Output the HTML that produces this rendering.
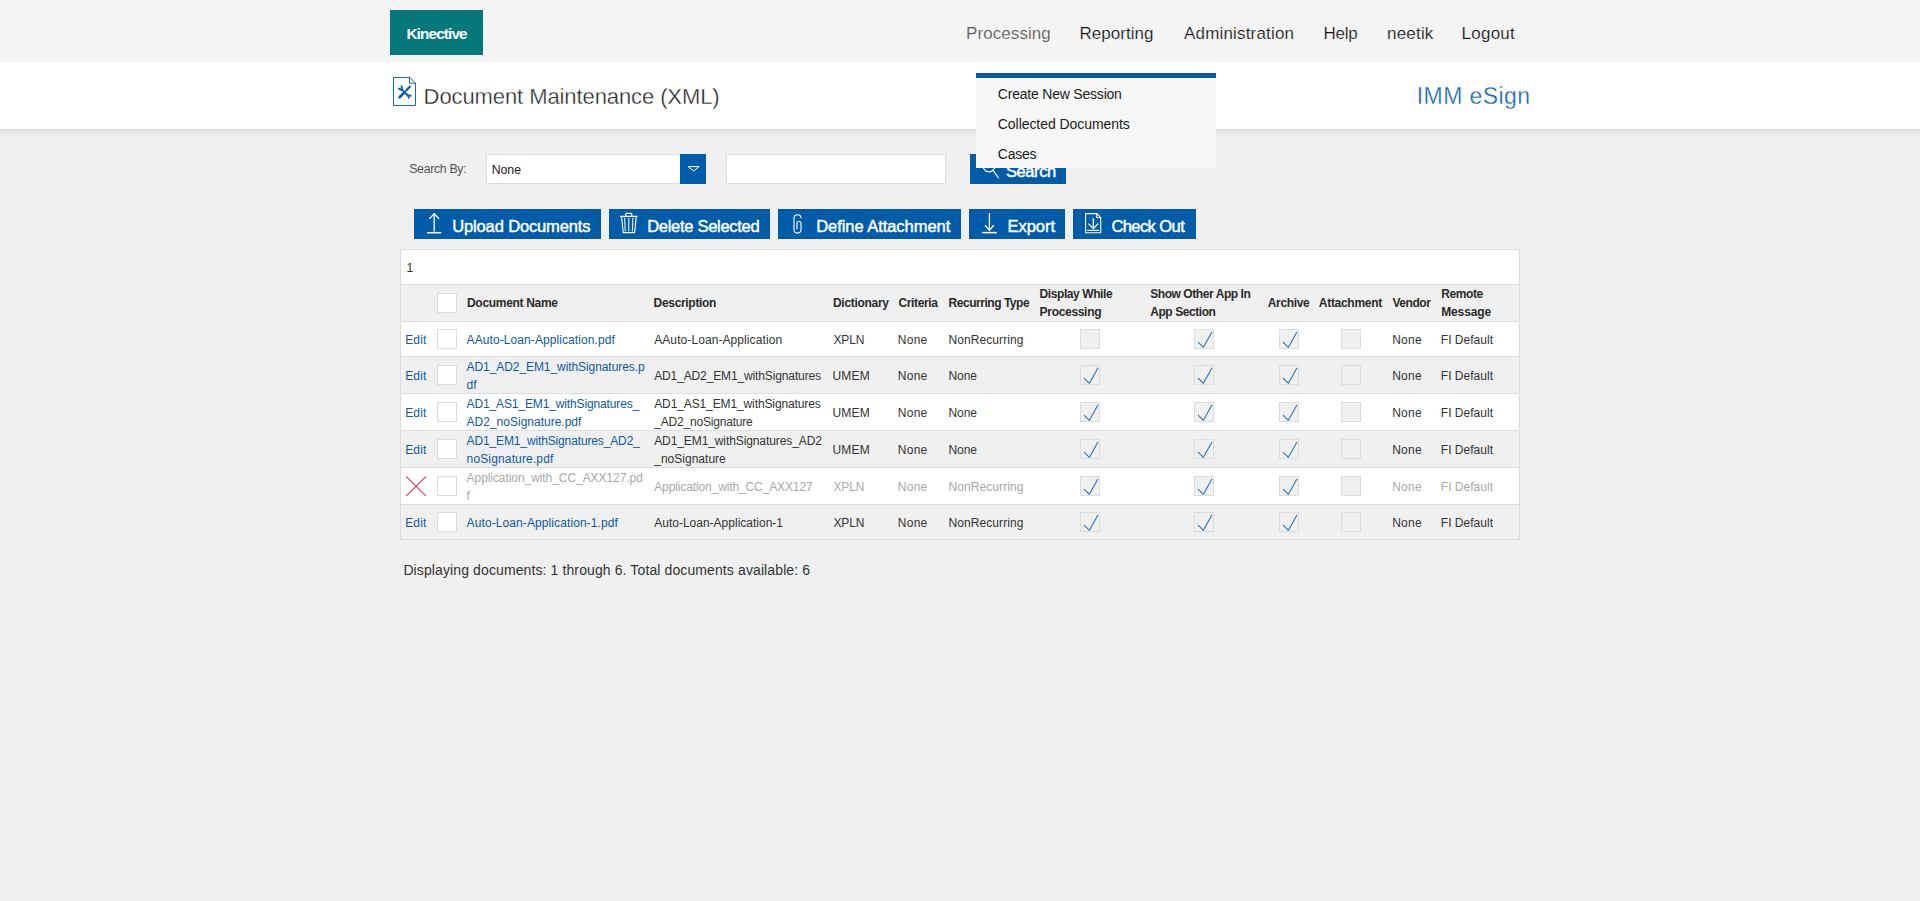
<!DOCTYPE html>
<html><head><meta charset="utf-8"><title>Document Maintenance (XML)</title>
<style>
html,body{margin:0;padding:0;}
body{width:1920px;height:901px;overflow:hidden;background:#f0f0f0;position:relative;font-family:"Liberation Sans",sans-serif;}
.b{position:absolute;}
.t{position:absolute;white-space:nowrap;}
</style></head><body>
<div class="b" style="left:0px;top:0px;width:1920px;height:62px;background:#f4f4f4"></div>
<div class="b" style="left:0px;top:62px;width:1920px;height:67px;background:#fff"></div>
<div class="b" style="left:0px;top:129px;width:1920px;height:8px;background:linear-gradient(rgba(0,0,0,0.09),rgba(0,0,0,0.035) 50%,rgba(0,0,0,0))"></div>
<div class="b" style="left:390px;top:10px;width:93px;height:45px;background:#05787b"></div>
<svg class="b" style="left:388px;top:72px" width="36" height="40" viewBox="388 72 36 40">
<path d="M393.5 77.5 H409.8 L415.5 83 V105.5 H393.5 Z" fill="none" stroke="#1a67b8" stroke-width="1"/>
<path d="M409.5 77.5 V83.2 H415.5" fill="none" stroke="#1a67b8" stroke-width="1"/>
<g stroke="#0a5fb0" fill="none" stroke-linecap="round">
<path d="M401.2 89 L408.4 96" stroke-width="1.9"/>
<path d="M400.6 89.8 L398.8 88.5" stroke-width="1.7"/>
<path d="M402.2 88.2 L401.3 86.2" stroke-width="1.7"/>
<path d="M409.2 95.2 L410.8 95.9" stroke-width="1.7"/>
<path d="M408.4 96.4 L408.9 98" stroke-width="1.7"/>
<path d="M399.6 97.2 L403.4 93.4" stroke-width="2.7"/>
<path d="M403.4 93.4 L407.2 89.4" stroke-width="1.5"/>
<path d="M407 89.6 L409.8 86.8" stroke-width="2.3"/>
</g>
</svg>
<div class="b" style="left:486px;top:154px;width:220px;height:30px;background:#fff;border:1px solid #dcdcdc;box-sizing:border-box"></div>
<div class="b" style="left:680px;top:154px;width:26px;height:30px;background:#005ca8"></div>
<svg class="b" style="left:680px;top:154px" width="26" height="30" viewBox="680 154 26 30">
<path d="M688.2 166.6 H699.2 L693.7 170.9 Z" fill="none" stroke="#fff" stroke-width="1" stroke-linejoin="miter"/>
</svg>
<div class="b" style="left:726px;top:154px;width:220px;height:30px;background:#fff;border:1px solid #dcdcdc;box-sizing:border-box"></div>
<div class="b" style="left:970px;top:154px;width:96px;height:30px;background:#005ca8"></div>
<svg class="b" style="left:970px;top:154px" width="40" height="30" viewBox="970 154 40 30">
<circle cx="989" cy="165.8" r="6" fill="none" stroke="#fff" stroke-width="1.2"/>
<path d="M993.2 170.4 L998.6 178.2" stroke="#fff" stroke-width="1.1"/>
</svg>
<div class="b" style="left:414px;top:209px;width:187px;height:30px;background:#005ca8"></div>
<div class="b" style="left:609px;top:209px;width:161px;height:30px;background:#005ca8"></div>
<div class="b" style="left:778px;top:209px;width:183px;height:30px;background:#005ca8"></div>
<div class="b" style="left:969px;top:209px;width:96px;height:30px;background:#005ca8"></div>
<div class="b" style="left:1073px;top:209px;width:123px;height:30px;background:#005ca8"></div>
<svg class="b" style="left:400px;top:205px" width="720" height="36" viewBox="400 205 720 36">
<g fill="none" stroke="#fff" stroke-width="1.3">
<path d="M434.2 213.8 V231.5"/><path d="M429.5 218.8 L434.2 213.6 L438.9 218.8"/><path d="M427 232.7 H441.3" stroke-width="1.5"/>
<path d="M620 216.4 H637.6" stroke-width="1.3"/><path d="M625.8 216.3 V214.2 Q625.8 213.4 626.6 213.4 H631 Q631.8 213.4 631.8 214.2 V216.3" stroke-width="1.1"/>
<path d="M621.5 216.5 L623.2 232.6 H634.6 L636.3 216.5" stroke-width="1.1"/>
<path d="M624.6 217.8 L625.3 231.5 M628.8 217.8 V231.5 M633 217.8 L632.3 231.5" stroke-width="1"/>
<path d="M801 218.2 A3.5 3.5 0 0 0 794 218.2 V229.6 A3.5 3.5 0 0 0 801 229.6 V223.5 A2 2 0 0 0 797 223.5 V229.2" stroke-width="1.1"/>
<path d="M989.4 213 V230.5"/><path d="M985 225.3 L989.4 230.3 L993.8 225.3"/><path d="M982.1 232.6 H996.9" stroke-width="1.5"/>
<path d="M1085.6 213.6 H1096.8 L1100.7 217.4 V232.8 H1085.6 Z" stroke-width="1.1"/>
<path d="M1096.6 213.6 V217.6 H1100.7" stroke-width="1"/>
<path d="M1093.3 218.3 V228.5"/><path d="M1088.4 223.6 L1093.3 228.6 L1098.2 223.6"/><path d="M1087.2 230.4 H1099" stroke-width="1.2"/>
</g></svg>
<div class="b" style="left:400px;top:249px;width:1120px;height:291px;background:#fff;border:1px solid #dcdcdc;box-sizing:border-box"></div>
<div class="b" style="left:401px;top:284px;width:1118px;height:1px;background:#dcdcdc"></div>
<div class="b" style="left:401px;top:321px;width:1118px;height:1px;background:#dcdcdc"></div>
<div class="b" style="left:401px;top:356px;width:1118px;height:1px;background:#dcdcdc"></div>
<div class="b" style="left:401px;top:393px;width:1118px;height:1px;background:#dcdcdc"></div>
<div class="b" style="left:401px;top:430px;width:1118px;height:1px;background:#dcdcdc"></div>
<div class="b" style="left:401px;top:467px;width:1118px;height:1px;background:#dcdcdc"></div>
<div class="b" style="left:401px;top:504px;width:1118px;height:1px;background:#dcdcdc"></div>
<div class="b" style="left:401px;top:285px;width:1118px;height:36px;background:#f0f0f0"></div>
<div class="b" style="left:401px;top:357px;width:1118px;height:36px;background:#f0f0f0"></div>
<div class="b" style="left:401px;top:431px;width:1118px;height:36px;background:#f0f0f0"></div>
<div class="b" style="left:401px;top:505px;width:1118px;height:34px;background:#f0f0f0"></div>
<div class="b" style="left:437px;top:293px;width:20px;height:20px;background:#fff;border:1px solid #dcdcdc;box-sizing:border-box"></div>
<div class="b" style="left:437px;top:329px;width:20px;height:20px;background:#fff;border:1px solid #dcdcdc;box-sizing:border-box"></div>
<div class="b" style="left:437px;top:365px;width:20px;height:20px;background:#fff;border:1px solid #dcdcdc;box-sizing:border-box"></div>
<div class="b" style="left:437px;top:402px;width:20px;height:20px;background:#fff;border:1px solid #dcdcdc;box-sizing:border-box"></div>
<div class="b" style="left:437px;top:439px;width:20px;height:20px;background:#fff;border:1px solid #dcdcdc;box-sizing:border-box"></div>
<div class="b" style="left:437px;top:476px;width:20px;height:20px;background:#fff;border:1px solid #dcdcdc;box-sizing:border-box"></div>
<div class="b" style="left:437px;top:512px;width:20px;height:20px;background:#fff;border:1px solid #dcdcdc;box-sizing:border-box"></div>
<div class="b" style="left:1080px;top:329px;width:20px;height:20px;background:#f0f0f0;border:1px solid #dcdcdc;box-sizing:border-box"></div>
<div class="b" style="left:1194px;top:329px;width:20px;height:20px;background:#f0f0f0;border:1px solid #dcdcdc;box-sizing:border-box"></div>
<div class="b" style="left:1279px;top:329px;width:20px;height:20px;background:#f0f0f0;border:1px solid #dcdcdc;box-sizing:border-box"></div>
<div class="b" style="left:1341px;top:329px;width:20px;height:20px;background:#f0f0f0;border:1px solid #dcdcdc;box-sizing:border-box"></div>
<div class="b" style="left:1080px;top:365px;width:20px;height:20px;background:#f0f0f0;border:1px solid #dcdcdc;box-sizing:border-box"></div>
<div class="b" style="left:1194px;top:365px;width:20px;height:20px;background:#f0f0f0;border:1px solid #dcdcdc;box-sizing:border-box"></div>
<div class="b" style="left:1279px;top:365px;width:20px;height:20px;background:#f0f0f0;border:1px solid #dcdcdc;box-sizing:border-box"></div>
<div class="b" style="left:1341px;top:365px;width:20px;height:20px;background:#f0f0f0;border:1px solid #dcdcdc;box-sizing:border-box"></div>
<div class="b" style="left:1080px;top:402px;width:20px;height:20px;background:#f0f0f0;border:1px solid #dcdcdc;box-sizing:border-box"></div>
<div class="b" style="left:1194px;top:402px;width:20px;height:20px;background:#f0f0f0;border:1px solid #dcdcdc;box-sizing:border-box"></div>
<div class="b" style="left:1279px;top:402px;width:20px;height:20px;background:#f0f0f0;border:1px solid #dcdcdc;box-sizing:border-box"></div>
<div class="b" style="left:1341px;top:402px;width:20px;height:20px;background:#f0f0f0;border:1px solid #dcdcdc;box-sizing:border-box"></div>
<div class="b" style="left:1080px;top:439px;width:20px;height:20px;background:#f0f0f0;border:1px solid #dcdcdc;box-sizing:border-box"></div>
<div class="b" style="left:1194px;top:439px;width:20px;height:20px;background:#f0f0f0;border:1px solid #dcdcdc;box-sizing:border-box"></div>
<div class="b" style="left:1279px;top:439px;width:20px;height:20px;background:#f0f0f0;border:1px solid #dcdcdc;box-sizing:border-box"></div>
<div class="b" style="left:1341px;top:439px;width:20px;height:20px;background:#f0f0f0;border:1px solid #dcdcdc;box-sizing:border-box"></div>
<div class="b" style="left:1080px;top:476px;width:20px;height:20px;background:#f0f0f0;border:1px solid #dcdcdc;box-sizing:border-box"></div>
<div class="b" style="left:1194px;top:476px;width:20px;height:20px;background:#f0f0f0;border:1px solid #dcdcdc;box-sizing:border-box"></div>
<div class="b" style="left:1279px;top:476px;width:20px;height:20px;background:#f0f0f0;border:1px solid #dcdcdc;box-sizing:border-box"></div>
<div class="b" style="left:1341px;top:476px;width:20px;height:20px;background:#f0f0f0;border:1px solid #dcdcdc;box-sizing:border-box"></div>
<div class="b" style="left:1080px;top:512px;width:20px;height:20px;background:#f0f0f0;border:1px solid #dcdcdc;box-sizing:border-box"></div>
<div class="b" style="left:1194px;top:512px;width:20px;height:20px;background:#f0f0f0;border:1px solid #dcdcdc;box-sizing:border-box"></div>
<div class="b" style="left:1279px;top:512px;width:20px;height:20px;background:#f0f0f0;border:1px solid #dcdcdc;box-sizing:border-box"></div>
<div class="b" style="left:1341px;top:512px;width:20px;height:20px;background:#f0f0f0;border:1px solid #dcdcdc;box-sizing:border-box"></div>
<svg class="b" style="left:1070px;top:320px" width="300" height="220" viewBox="1070 320 300 220"><g fill="none" stroke="#1d6fc2" stroke-width="1.05" stroke-linecap="round" stroke-linejoin="round"><path d="M1198.3 342.3 L1203.4 347.3 L1211.8 332.2"/><path d="M1283.3 342.3 L1288.4 347.3 L1296.8 332.2"/><path d="M1084.3 378.3 L1089.4 383.3 L1097.8 368.2"/><path d="M1198.3 378.3 L1203.4 383.3 L1211.8 368.2"/><path d="M1283.3 378.3 L1288.4 383.3 L1296.8 368.2"/><path d="M1084.3 415.3 L1089.4 420.3 L1097.8 405.2"/><path d="M1198.3 415.3 L1203.4 420.3 L1211.8 405.2"/><path d="M1283.3 415.3 L1288.4 420.3 L1296.8 405.2"/><path d="M1084.3 452.3 L1089.4 457.3 L1097.8 442.2"/><path d="M1198.3 452.3 L1203.4 457.3 L1211.8 442.2"/><path d="M1283.3 452.3 L1288.4 457.3 L1296.8 442.2"/><path d="M1084.3 489.3 L1089.4 494.3 L1097.8 479.2"/><path d="M1198.3 489.3 L1203.4 494.3 L1211.8 479.2"/><path d="M1283.3 489.3 L1288.4 494.3 L1296.8 479.2"/><path d="M1084.3 525.3 L1089.4 530.3 L1097.8 515.2"/><path d="M1198.3 525.3 L1203.4 530.3 L1211.8 515.2"/><path d="M1283.3 525.3 L1288.4 530.3 L1296.8 515.2"/></g></svg>
<svg class="b" style="left:400px;top:470px" width="40" height="30" viewBox="400 470 40 30">
<path d="M406.3 476.6 L425.9 495.9 M425.9 476.6 L406.3 495.9" stroke="#d9405a" stroke-width="1.2" fill="none"/>
</svg>
<div class="b" style="left:976px;top:73px;width:240px;height:5px;background:#005ca8;z-index:10"></div>
<div class="b" style="left:976px;top:78px;width:240px;height:1px;background:#fff;z-index:10"></div>
<div class="b" style="left:976px;top:79px;width:240px;height:89px;background:#f7f7f7;z-index:10"></div>
<div class="t" id="t0" style="left:406.40px;top:25.75px;font-size:15.3px;line-height:15.3px;letter-spacing:-0.850px;color:#ffffff;font-weight:bold;">Kinective</div>
<div class="t" id="t1" style="left:966.00px;top:24.61px;font-size:17px;line-height:17px;letter-spacing:0.078px;color:#555555;font-weight:normal;-webkit-text-stroke:0.2px #f4f4f4">Processing</div>
<div class="t" id="t2" style="left:1079.40px;top:24.61px;font-size:17px;line-height:17px;letter-spacing:0.038px;color:#111111;font-weight:normal;-webkit-text-stroke:0.2px #f4f4f4">Reporting</div>
<div class="t" id="t3" style="left:1184.00px;top:24.61px;font-size:17px;line-height:17px;letter-spacing:0.177px;color:#111111;font-weight:normal;-webkit-text-stroke:0.2px #f4f4f4">Administration</div>
<div class="t" id="t4" style="left:1323.60px;top:24.61px;font-size:17px;line-height:17px;letter-spacing:-0.300px;color:#111111;font-weight:normal;-webkit-text-stroke:0.2px #f4f4f4">Help</div>
<div class="t" id="t5" style="left:1387.00px;top:24.61px;font-size:17px;line-height:17px;letter-spacing:0.200px;color:#111111;font-weight:normal;-webkit-text-stroke:0.2px #f4f4f4">neetik</div>
<div class="t" id="t6" style="left:1461.60px;top:24.61px;font-size:17px;line-height:17px;letter-spacing:0.240px;color:#111111;font-weight:normal;-webkit-text-stroke:0.2px #f4f4f4">Logout</div>
<div class="t" id="t7" style="left:423.60px;top:85.58px;font-size:22px;line-height:22px;letter-spacing:-0.092px;color:#222222;font-weight:normal;-webkit-text-stroke:0.35px #fff">Document Maintenance (XML)</div>
<div class="t" id="t8" style="left:1416.80px;top:84.73px;font-size:23px;line-height:23px;letter-spacing:0.413px;color:#0f65b0;font-weight:normal;-webkit-text-stroke:0.3px #fff">IMM eSign</div>
<div class="t" id="t9" style="left:409.20px;top:162.79px;font-size:12.3px;line-height:12.3px;letter-spacing:-0.300px;color:#555555;font-weight:normal;">Search By:</div>
<div class="t" id="t10" style="left:491.70px;top:163.59px;font-size:12.3px;line-height:12.3px;letter-spacing:-0.033px;color:#222222;font-weight:normal;">None</div>
<div class="t" id="t11" style="left:1006.00px;top:162.83px;font-size:16.5px;line-height:16.5px;letter-spacing:-0.420px;color:#ffffff;font-weight:normal;-webkit-text-stroke-width:0.45px">Search</div>
<div class="t" id="t12" style="left:452.20px;top:217.63px;font-size:16.5px;line-height:16.5px;letter-spacing:-0.133px;color:#ffffff;font-weight:normal;-webkit-text-stroke-width:0.45px">Upload Documents</div>
<div class="t" id="t13" style="left:647.20px;top:217.63px;font-size:16.5px;line-height:16.5px;letter-spacing:-0.286px;color:#ffffff;font-weight:normal;-webkit-text-stroke-width:0.45px">Delete Selected</div>
<div class="t" id="t14" style="left:816.20px;top:217.63px;font-size:16.5px;line-height:16.5px;letter-spacing:-0.050px;color:#ffffff;font-weight:normal;-webkit-text-stroke-width:0.45px">Define Attachment</div>
<div class="t" id="t15" style="left:1007.60px;top:217.63px;font-size:16.5px;line-height:16.5px;letter-spacing:-0.060px;color:#ffffff;font-weight:normal;-webkit-text-stroke-width:0.45px">Export</div>
<div class="t" id="t16" style="left:1111.40px;top:217.63px;font-size:16.5px;line-height:16.5px;letter-spacing:-0.575px;color:#ffffff;font-weight:normal;-webkit-text-stroke-width:0.45px">Check Out</div>
<div class="t" id="t17" style="left:406.40px;top:261.84px;font-size:12px;line-height:12px;letter-spacing:0.000px;color:#333333;font-weight:normal;">1</div>
<div class="t" id="t18" style="left:467.00px;top:296.74px;font-size:12px;line-height:12px;letter-spacing:-0.308px;color:#2a2a2a;font-weight:bold;">Document Name</div>
<div class="t" id="t19" style="left:653.60px;top:296.74px;font-size:12px;line-height:12px;letter-spacing:-0.320px;color:#2a2a2a;font-weight:bold;">Description</div>
<div class="t" id="t20" style="left:833.00px;top:296.74px;font-size:12px;line-height:12px;letter-spacing:-0.300px;color:#2a2a2a;font-weight:bold;">Dictionary</div>
<div class="t" id="t21" style="left:898.50px;top:296.74px;font-size:12px;line-height:12px;letter-spacing:-0.357px;color:#2a2a2a;font-weight:bold;">Criteria</div>
<div class="t" id="t22" style="left:948.50px;top:296.74px;font-size:12px;line-height:12px;letter-spacing:-0.462px;color:#2a2a2a;font-weight:bold;">Recurring Type</div>
<div class="t" id="t23" style="left:1039.60px;top:288.34px;font-size:12px;line-height:12px;letter-spacing:-0.417px;color:#2a2a2a;font-weight:bold;">Display While</div>
<div class="t" id="t24" style="left:1039.60px;top:306.34px;font-size:12px;line-height:12px;letter-spacing:-0.311px;color:#2a2a2a;font-weight:bold;">Processing</div>
<div class="t" id="t25" style="left:1150.20px;top:288.34px;font-size:12px;line-height:12px;letter-spacing:-0.431px;color:#2a2a2a;font-weight:bold;">Show Other App In</div>
<div class="t" id="t26" style="left:1150.20px;top:306.34px;font-size:12px;line-height:12px;letter-spacing:-0.430px;color:#2a2a2a;font-weight:bold;">App Section</div>
<div class="t" id="t27" style="left:1267.80px;top:296.74px;font-size:12px;line-height:12px;letter-spacing:-0.350px;color:#2a2a2a;font-weight:bold;">Archive</div>
<div class="t" id="t28" style="left:1318.80px;top:296.74px;font-size:12px;line-height:12px;letter-spacing:-0.289px;color:#2a2a2a;font-weight:bold;">Attachment</div>
<div class="t" id="t29" style="left:1392.40px;top:296.74px;font-size:12px;line-height:12px;letter-spacing:-0.440px;color:#2a2a2a;font-weight:bold;">Vendor</div>
<div class="t" id="t30" style="left:1441.20px;top:288.34px;font-size:12px;line-height:12px;letter-spacing:-0.400px;color:#2a2a2a;font-weight:bold;">Remote</div>
<div class="t" id="t31" style="left:1441.20px;top:306.34px;font-size:12px;line-height:12px;letter-spacing:-0.133px;color:#2a2a2a;font-weight:bold;">Message</div>
<div class="t" id="t32" style="left:405.20px;top:333.84px;font-size:12px;line-height:12px;letter-spacing:0.167px;color:#0a5aa8;font-weight:normal;">Edit</div>
<div class="t" id="t33" style="left:466.60px;top:333.84px;font-size:12px;line-height:12px;letter-spacing:0.084px;color:#0a5aa8;font-weight:normal;">AAuto-Loan-Application.pdf</div>
<div class="t" id="t34" style="left:654.20px;top:333.84px;font-size:12px;line-height:12px;letter-spacing:0.086px;color:#333333;font-weight:normal;">AAuto-Loan-Application</div>
<div class="t" id="t35" style="left:833.50px;top:333.84px;font-size:12px;line-height:12px;letter-spacing:-0.133px;color:#333333;font-weight:normal;">XPLN</div>
<div class="t" id="t36" style="left:897.80px;top:333.84px;font-size:12px;line-height:12px;letter-spacing:0.267px;color:#333333;font-weight:normal;">None</div>
<div class="t" id="t37" style="left:948.40px;top:333.84px;font-size:12px;line-height:12px;letter-spacing:0.091px;color:#333333;font-weight:normal;">NonRecurring</div>
<div class="t" id="t38" style="left:1392.20px;top:333.84px;font-size:12px;line-height:12px;letter-spacing:0.267px;color:#333333;font-weight:normal;">None</div>
<div class="t" id="t39" style="left:1440.80px;top:333.84px;font-size:12px;line-height:12px;letter-spacing:0.022px;color:#333333;font-weight:normal;">FI Default</div>
<div class="t" id="t40" style="left:405.20px;top:369.84px;font-size:12px;line-height:12px;letter-spacing:0.167px;color:#0a5aa8;font-weight:normal;">Edit</div>
<div class="t" id="t41" style="left:466.60px;top:360.84px;font-size:12px;line-height:12px;letter-spacing:-0.078px;color:#0a5aa8;font-weight:normal;">AD1_AD2_EM1_withSignatures.p</div>
<div class="t" id="t42" style="left:466.60px;top:378.84px;font-size:12px;line-height:12px;letter-spacing:0.000px;color:#0a5aa8;font-weight:normal;">df</div>
<div class="t" id="t43" style="left:654.20px;top:369.84px;font-size:12px;line-height:12px;letter-spacing:-0.128px;color:#333333;font-weight:normal;">AD1_AD2_EM1_withSignatures</div>
<div class="t" id="t44" style="left:832.50px;top:369.84px;font-size:12px;line-height:12px;letter-spacing:0.167px;color:#333333;font-weight:normal;">UMEM</div>
<div class="t" id="t45" style="left:897.80px;top:369.84px;font-size:12px;line-height:12px;letter-spacing:0.267px;color:#333333;font-weight:normal;">None</div>
<div class="t" id="t46" style="left:948.40px;top:369.84px;font-size:12px;line-height:12px;letter-spacing:-0.033px;color:#333333;font-weight:normal;">None</div>
<div class="t" id="t47" style="left:1392.20px;top:369.84px;font-size:12px;line-height:12px;letter-spacing:0.267px;color:#333333;font-weight:normal;">None</div>
<div class="t" id="t48" style="left:1440.80px;top:369.84px;font-size:12px;line-height:12px;letter-spacing:0.022px;color:#333333;font-weight:normal;">FI Default</div>
<div class="t" id="t49" style="left:405.20px;top:406.84px;font-size:12px;line-height:12px;letter-spacing:0.167px;color:#0a5aa8;font-weight:normal;">Edit</div>
<div class="t" id="t50" style="left:466.60px;top:397.84px;font-size:12px;line-height:12px;letter-spacing:-0.131px;color:#0a5aa8;font-weight:normal;">AD1_AS1_EM1_withSignatures_</div>
<div class="t" id="t51" style="left:466.60px;top:415.84px;font-size:12px;line-height:12px;letter-spacing:0.000px;color:#0a5aa8;font-weight:normal;">AD2_noSignature.pdf</div>
<div class="t" id="t52" style="left:654.20px;top:397.84px;font-size:12px;line-height:12px;letter-spacing:-0.112px;color:#333333;font-weight:normal;">AD1_AS1_EM1_withSignatures</div>
<div class="t" id="t53" style="left:654.20px;top:415.84px;font-size:12px;line-height:12px;letter-spacing:-0.187px;color:#333333;font-weight:normal;">_AD2_noSignature</div>
<div class="t" id="t54" style="left:832.50px;top:406.84px;font-size:12px;line-height:12px;letter-spacing:0.167px;color:#333333;font-weight:normal;">UMEM</div>
<div class="t" id="t55" style="left:897.80px;top:406.84px;font-size:12px;line-height:12px;letter-spacing:0.267px;color:#333333;font-weight:normal;">None</div>
<div class="t" id="t56" style="left:948.40px;top:406.84px;font-size:12px;line-height:12px;letter-spacing:-0.033px;color:#333333;font-weight:normal;">None</div>
<div class="t" id="t57" style="left:1392.20px;top:406.84px;font-size:12px;line-height:12px;letter-spacing:0.267px;color:#333333;font-weight:normal;">None</div>
<div class="t" id="t58" style="left:1440.80px;top:406.84px;font-size:12px;line-height:12px;letter-spacing:0.022px;color:#333333;font-weight:normal;">FI Default</div>
<div class="t" id="t59" style="left:405.20px;top:443.84px;font-size:12px;line-height:12px;letter-spacing:0.167px;color:#0a5aa8;font-weight:normal;">Edit</div>
<div class="t" id="t60" style="left:466.60px;top:434.84px;font-size:12px;line-height:12px;letter-spacing:-0.135px;color:#0a5aa8;font-weight:normal;">AD1_EM1_withSignatures_AD2_</div>
<div class="t" id="t61" style="left:466.60px;top:452.84px;font-size:12px;line-height:12px;letter-spacing:0.143px;color:#0a5aa8;font-weight:normal;">noSignature.pdf</div>
<div class="t" id="t62" style="left:654.20px;top:434.84px;font-size:12px;line-height:12px;letter-spacing:-0.096px;color:#333333;font-weight:normal;">AD1_EM1_withSignatures_AD2</div>
<div class="t" id="t63" style="left:654.20px;top:452.84px;font-size:12px;line-height:12px;letter-spacing:0.018px;color:#333333;font-weight:normal;">_noSignature</div>
<div class="t" id="t64" style="left:832.50px;top:443.84px;font-size:12px;line-height:12px;letter-spacing:0.167px;color:#333333;font-weight:normal;">UMEM</div>
<div class="t" id="t65" style="left:897.80px;top:443.84px;font-size:12px;line-height:12px;letter-spacing:0.267px;color:#333333;font-weight:normal;">None</div>
<div class="t" id="t66" style="left:948.40px;top:443.84px;font-size:12px;line-height:12px;letter-spacing:-0.033px;color:#333333;font-weight:normal;">None</div>
<div class="t" id="t67" style="left:1392.20px;top:443.84px;font-size:12px;line-height:12px;letter-spacing:0.267px;color:#333333;font-weight:normal;">None</div>
<div class="t" id="t68" style="left:1440.80px;top:443.84px;font-size:12px;line-height:12px;letter-spacing:0.022px;color:#333333;font-weight:normal;">FI Default</div>
<div class="t" id="t69" style="left:466.60px;top:471.84px;font-size:12px;line-height:12px;letter-spacing:-0.068px;color:#a8a8a8;font-weight:normal;">Application_with_CC_AXX127.pd</div>
<div class="t" id="t70" style="left:466.60px;top:489.84px;font-size:12px;line-height:12px;letter-spacing:0.000px;color:#a8a8a8;font-weight:normal;">f</div>
<div class="t" id="t71" style="left:654.20px;top:480.84px;font-size:12px;line-height:12px;letter-spacing:-0.120px;color:#a8a8a8;font-weight:normal;">Application_with_CC_AXX127</div>
<div class="t" id="t72" style="left:833.50px;top:480.84px;font-size:12px;line-height:12px;letter-spacing:-0.133px;color:#a8a8a8;font-weight:normal;">XPLN</div>
<div class="t" id="t73" style="left:897.80px;top:480.84px;font-size:12px;line-height:12px;letter-spacing:0.267px;color:#a8a8a8;font-weight:normal;">None</div>
<div class="t" id="t74" style="left:948.40px;top:480.84px;font-size:12px;line-height:12px;letter-spacing:0.091px;color:#a8a8a8;font-weight:normal;">NonRecurring</div>
<div class="t" id="t75" style="left:1392.20px;top:480.84px;font-size:12px;line-height:12px;letter-spacing:0.267px;color:#a8a8a8;font-weight:normal;">None</div>
<div class="t" id="t76" style="left:1440.80px;top:480.84px;font-size:12px;line-height:12px;letter-spacing:0.022px;color:#a8a8a8;font-weight:normal;">FI Default</div>
<div class="t" id="t77" style="left:405.20px;top:516.84px;font-size:12px;line-height:12px;letter-spacing:0.167px;color:#0a5aa8;font-weight:normal;">Edit</div>
<div class="t" id="t78" style="left:466.60px;top:516.84px;font-size:12px;line-height:12px;letter-spacing:0.096px;color:#0a5aa8;font-weight:normal;">Auto-Loan-Application-1.pdf</div>
<div class="t" id="t79" style="left:654.20px;top:516.84px;font-size:12px;line-height:12px;letter-spacing:0.005px;color:#333333;font-weight:normal;">Auto-Loan-Application-1</div>
<div class="t" id="t80" style="left:833.50px;top:516.84px;font-size:12px;line-height:12px;letter-spacing:-0.133px;color:#333333;font-weight:normal;">XPLN</div>
<div class="t" id="t81" style="left:897.80px;top:516.84px;font-size:12px;line-height:12px;letter-spacing:0.267px;color:#333333;font-weight:normal;">None</div>
<div class="t" id="t82" style="left:948.40px;top:516.84px;font-size:12px;line-height:12px;letter-spacing:0.091px;color:#333333;font-weight:normal;">NonRecurring</div>
<div class="t" id="t83" style="left:1392.20px;top:516.84px;font-size:12px;line-height:12px;letter-spacing:0.267px;color:#333333;font-weight:normal;">None</div>
<div class="t" id="t84" style="left:1440.80px;top:516.84px;font-size:12px;line-height:12px;letter-spacing:0.022px;color:#333333;font-weight:normal;">FI Default</div>
<div class="t" id="t85" style="left:403.40px;top:563.15px;font-size:14px;line-height:14px;letter-spacing:0.111px;color:#333333;font-weight:normal;">Displaying documents: 1 through 6. Total documents available: 6</div>
<div class="t" id="t86" style="left:997.80px;top:87.25px;font-size:14px;line-height:14px;letter-spacing:-0.206px;color:#1c1c1c;font-weight:normal;z-index:11">Create New Session</div>
<div class="t" id="t87" style="left:997.80px;top:117.05px;font-size:14px;line-height:14px;letter-spacing:-0.056px;color:#1c1c1c;font-weight:normal;z-index:11">Collected Documents</div>
<div class="t" id="t88" style="left:997.80px;top:146.95px;font-size:14px;line-height:14px;letter-spacing:-0.250px;color:#1c1c1c;font-weight:normal;z-index:11">Cases</div>
</body></html>
